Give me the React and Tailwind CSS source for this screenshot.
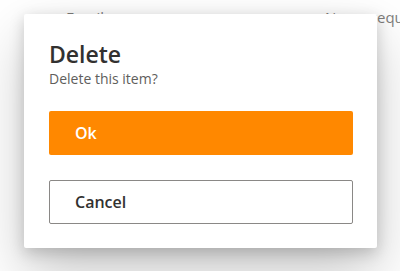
export default function App() {
  return (
    <div className="relative w-[400px] h-[271px] overflow-hidden bg-white" style={{ fontFamily: '"Open Sans", "Noto Sans", sans-serif' }}>
      <div className="flex pt-[7px] text-[15px] leading-[20px] text-[#605e5c]">
        <span className="w-[325px] pl-[66px] shrink-0">Email</span>
        <span className="whitespace-nowrap">Name required</span>
      </div>
      <div className="absolute inset-0 bg-white/20" />
      <div className="absolute left-[24px] top-[14px] w-[353px] h-[234px] bg-white rounded-[2px] shadow-[0_25.6px_57.6px_0_rgba(0,0,0,0.22),0_4.8px_14.4px_0_rgba(0,0,0,0.18)] pl-[25px] pr-[24px] pt-[25px]">
        <div className="text-[23px] leading-[30px] font-semibold text-[#323130]">Delete</div>
        <div className="text-[14px] leading-[20px] text-[#605e5c]">Delete this item?</div>
        <button className="mt-[22px] flex items-center w-full h-[44px] rounded-[2px] bg-[#ff8800] pl-[26px] text-white text-[16px] font-semibold">Ok</button>
        <button className="mt-[25px] flex items-center w-full h-[44px] rounded-[2px] bg-white border border-[#8a8886] pl-[25px] text-[#323130] text-[16px] font-semibold">Cancel</button>
      </div>
    </div>
  );
}
